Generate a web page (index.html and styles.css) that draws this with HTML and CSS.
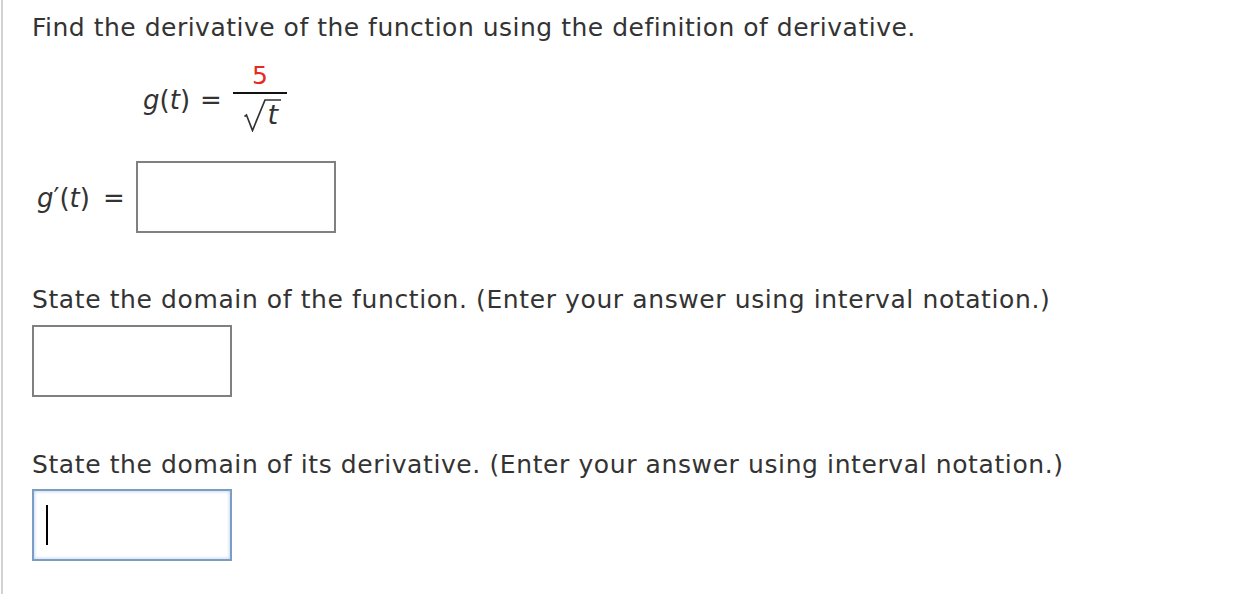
FILE: index.html
```html
<!DOCTYPE html>
<html>
<head>
<meta charset="utf-8">
<link rel="stylesheet" href="styles.css">
</head>
<body>
<div class="page">
  <p class="q">Find the derivative of the function using the definition of derivative.</p>
  <div class="eq">
    <span class="lhs"><span class="m">g</span>(<span class="m">t</span>)</span>
    <span class="eqs">=</span>
    <span class="frac">
      <span class="num">5</span>
      <span class="den"><svg class="rad" width="38" height="33" viewBox="0 0 38 33"><path d="M0.5 17.5 L2.5 16 L8.5 31.5 L21 1 L37 1" fill="none" stroke="#333" stroke-width="1.7" stroke-linejoin="miter"/></svg><span class="radicand m">t</span></span>
    </span>
  </div>
  <div class="ans-row">
    <span class="lbl"><span class="m">g</span>′(<span class="m">t</span>)<span class="eqs2">=</span></span>
    <span class="box"></span>
  </div>
  <p class="q q2">State the domain of the function. (Enter your answer using interval notation.)</p>
  <div class="box"></div>
  <p class="q q3">State the domain of its derivative. (Enter your answer using interval notation.)</p>
  <div class="box focus"><span class="caret"></span></div>
</div>
</body>
</html>
```
FILE: styles.css
```css
html, body {
  margin: 0;
  padding: 0;
  background: #fff;
}
.page {
  margin-left: 1px;
  border-left: 2px solid #d2d2d2;
  height: 594px;
  box-sizing: border-box;
  padding: 12px 0 0 29px;
  font-family: "DejaVu Sans", Verdana, sans-serif;
  font-size: 25px;
  letter-spacing: 0.5px;
  color: #333;
}
.q {
  margin: 0;
  line-height: 32px;
}
.q2, .q3 { letter-spacing: 0.6px; }
.eq {
  display: flex;
  align-items: flex-start;
  padding-left: 111px;
  margin-top: 18px;
  height: 72px;
  font-size: 26px;
  letter-spacing: 0;
  line-height: 30px;
}
.m { font-style: italic; }
.lhs { margin-top: 23px; }
.eqs { margin: 23px 0 0 10px; }
.frac {
  display: flex;
  flex-direction: column;
  align-items: center;
  margin-left: 11px;
  width: 54px;
}
.num {
  color: #e8291c;
  font-size: 25px;
  line-height: 28px;
  padding-bottom: 2px;
  border-bottom: 2px solid #111;
  width: 100%;
  text-align: center;
}
.den {
  display: flex;
  align-items: flex-start;
  margin-top: 5px;
  margin-left: 2px;
}
.rad { display: block; }
.radicand {
  font-size: 27px;
  margin-left: -14px;
  margin-top: 1px;
  line-height: 30px;
}
.ans-row {
  display: flex;
  align-items: flex-start;
  margin-top: 27px;
  margin-left: 5px;
  font-size: 26px;
  letter-spacing: 0;
  line-height: 30px;
}
.lbl { margin-top: 22px; margin-right: 11px; }
.eqs2 { margin-left: 13px; }
.box {
  display: block;
  width: 200px;
  height: 72px;
  box-sizing: border-box;
  border: 2px solid #808080;
  background: #fff;
  position: relative;
}
.q2 { margin-top: 51px; margin-bottom: 9px; }
.q3 { margin-top: 52px; margin-bottom: 8px; }
.focus {
  border-color: #7b9dc3;
  box-shadow: inset 0 0 3px 1px rgba(160, 190, 230, 0.55);
}
.caret {
  position: absolute;
  left: 12px;
  top: 14px;
  width: 2px;
  height: 40px;
  background: #000;
}
```
